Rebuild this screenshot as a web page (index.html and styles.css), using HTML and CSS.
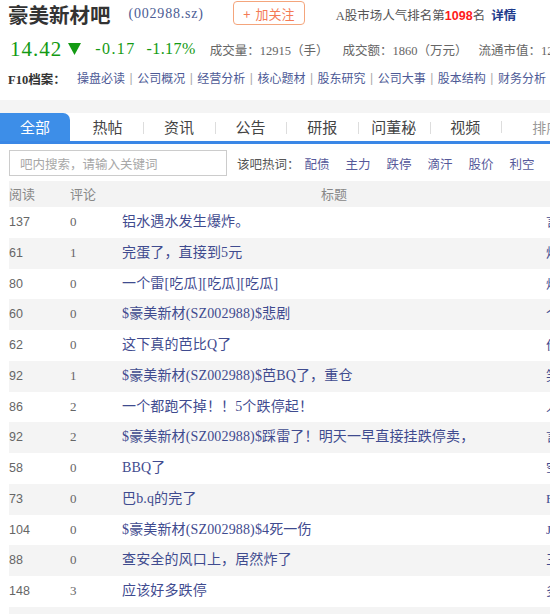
FILE: index.html
```html
<!DOCTYPE html>
<html lang="zh-CN">
<head>
    <meta charset="UTF-8">
    <meta name="viewport" content="width=device-width, initial-scale=1.0">
    <title>豪美新材吧</title>
    <link rel="stylesheet" href="styles.css">
</head>
<body>
    <div class="page">
        <div class="bar-head">
            <h1 class="bar-name">豪美新材吧</h1>
            <span class="bar-code">(002988.sz)</span>
            <a class="follow-btn" href="#"><span class="plus">+</span>加关注</a>
            <span class="rank">A股市场人气排名第<b class="rank-num">1098</b>名 <a class="rank-more" href="#">详情</a></span>
        </div>

        <div class="quote">
            <span class="price">14.42</span>
            <svg class="arrow" width="13" height="12" viewBox="0 0 13 12"><path d="M0 0 H13 L6.5 12 Z" fill="#139a13"/></svg>
            <span class="change">-0.17</span>
            <span class="change pct">-1.17%</span>
            <span class="stat">成交量：12915（手）</span>
            <span class="stat">成交额：1860（万元）</span>
            <span class="stat last">流通市值：12.35（亿）</span>
        </div>

        <div class="f10">
            <span class="f10-label">F10档案：</span>
            <a href="#">操盘必读</a><span class="sep">|</span>
            <a href="#">公司概况</a><span class="sep">|</span>
            <a href="#">经营分析</a><span class="sep">|</span>
            <a href="#">核心题材</a><span class="sep">|</span>
            <a href="#">股东研究</a><span class="sep">|</span>
            <a href="#">公司大事</a><span class="sep">|</span>
            <a href="#">股本结构</a><span class="sep">|</span>
            <a href="#">财务分析</a>
        </div>

        <div class="band"></div>

        <div class="tabs">
            <a class="tab active" href="#">全部</a>
            <a class="tab" href="#">热帖</a>
            <a class="tab" href="#">资讯</a>
            <a class="tab" href="#">公告</a>
            <a class="tab" href="#">研报</a>
            <a class="tab" href="#">问董秘</a>
            <a class="tab" href="#">视频</a>
            <span class="sort">排序方式</span>
        </div>

        <div class="search-row">
            <input class="search-box" type="text" placeholder="吧内搜索，请输入关键词">
            <span class="hot-label">该吧热词：</span>
            <a class="hot-word" href="#">配债</a>
            <a class="hot-word" href="#">主力</a>
            <a class="hot-word" href="#">跌停</a>
            <a class="hot-word" href="#">滴汗</a>
            <a class="hot-word" href="#">股价</a>
            <a class="hot-word" href="#">利空</a>
        </div>

        <div class="post-list">
            <div class="post-row post-head">
                <span>阅读</span><span>评论</span><span class="col-title">标题</span><span></span>
            </div>
            <div class="post-row"><span class="read">137</span><span class="reply">0</span><a class="title" href="#">铝水遇水发生爆炸。</a><a class="author" href="#">言之有理</a></div>
            <div class="post-row"><span class="read">61</span><span class="reply">1</span><a class="title" href="#">完蛋了，直接到5元</a><a class="author" href="#">炉火纯青</a></div>
            <div class="post-row"><span class="read">80</span><span class="reply">0</span><a class="title" href="#">一个雷[吃瓜][吃瓜][吃瓜]</a><a class="author" href="#">炒股养家</a></div>
            <div class="post-row"><span class="read">60</span><span class="reply">0</span><a class="title" href="#">$豪美新材(SZ002988)$悲剧</a><a class="author" href="#">个股观察</a></div>
            <div class="post-row"><span class="read">62</span><span class="reply">0</span><a class="title" href="#">这下真的芭比Q了</a><a class="author" href="#">价值投资</a></div>
            <div class="post-row"><span class="read">92</span><span class="reply">1</span><a class="title" href="#">$豪美新材(SZ002988)$芭BQ了，重仓</a><a class="author" href="#">笑看风云</a></div>
            <div class="post-row"><span class="read">86</span><span class="reply">2</span><a class="title" href="#">一个都跑不掉！！5个跌停起！</a><a class="author" href="#">人生如戏</a></div>
            <div class="post-row"><span class="read">92</span><span class="reply">2</span><a class="title" href="#">$豪美新材(SZ002988)$踩雷了！明天一早直接挂跌停卖，</a><a class="author" href="#">言而有信</a></div>
            <div class="post-row"><span class="read">58</span><span class="reply">0</span><a class="title" href="#">BBQ了</a><a class="author" href="#">空仓等待</a></div>
            <div class="post-row"><span class="read">73</span><span class="reply">0</span><a class="title" href="#">巴b.q的完了</a><a class="author" href="#">Frank</a></div>
            <div class="post-row"><span class="read">104</span><span class="reply">0</span><a class="title" href="#">$豪美新材(SZ002988)$4死一伤</a><a class="author" href="#">Jason</a></div>
            <div class="post-row"><span class="read">88</span><span class="reply">0</span><a class="title" href="#">查安全的风口上，居然炸了</a><a class="author" href="#">三思而行</a></div>
            <div class="post-row"><span class="read">148</span><span class="reply">3</span><a class="title" href="#">应该好多跌停</a><a class="author" href="#">多空博弈</a></div>
            <div class="post-row"><span class="read">75</span><span class="reply">0</span><a class="title" href="#">明天还有吗</a><a class="author" href="#">股友</a></div>
        </div>
    </div>
</body>
</html>
```

FILE: styles.css
```css
* {
    margin: 0;
    padding: 0;
    box-sizing: border-box;
}

body {
    overflow: hidden;
    background: #ffffff;
    font-family: "Liberation Serif", "Noto Sans CJK SC", serif;
    color: #333;
}

a {
    text-decoration: none;
}

.page {
    width: 1000px;
}

/* header */
.bar-head {
    display: flex;
    align-items: center;
    height: 28px;
    padding-left: 8px;
}

.bar-name {
    font-family: "Noto Sans CJK SC", sans-serif;
    font-size: 20.5px;
    font-weight: 700;
    color: #333;
    line-height: 26px;
}

.bar-code {
    margin-left: 18px;
    font-size: 14px;
    letter-spacing: 0.8px;
    color: #4c5c94;
}

.follow-btn {
    display: flex;
    align-items: center;
    justify-content: center;
    width: 72px;
    height: 24px;
    margin-left: 29px;
    margin-top: -2px;
    border: 1px solid #f4a57c;
    border-radius: 4px;
    font-family: "Noto Sans CJK SC", sans-serif;
    font-size: 13px;
    color: #f47a55;
}

.follow-btn .plus {
    margin-right: 5px;
}

.rank {
    margin-left: 31px;
    font-size: 12.5px;
    color: #555;
}

.rank-num {
    font-family: "Liberation Sans", sans-serif;
    color: #ff1a1a;
}

.rank-more {
    margin-left: 3px;
    font-weight: 700;
    color: #1d3a8c;
}

/* quote line */
.quote {
    display: flex;
    align-items: center;
    height: 30px;
    margin-top: 6px;
    padding-left: 10px;
    white-space: nowrap;
}

.price {
    font-size: 21px;
    letter-spacing: 1px;
    color: #139a13;
}

.arrow {
    margin-left: 6px;
}

.change {
    margin-left: 14px;
    font-size: 16px;
    letter-spacing: 1.4px;
    color: #139a13;
}

.change.pct {
    margin-left: 11px;
    letter-spacing: 0.4px;
}

.stat {
    margin-left: 14px;
    font-size: 12.5px;
    color: #666;
}

.stat + .stat {
    margin-left: 14px;
}

.stat.last {
    margin-left: 11px;
}

/* F10 links */
.f10 {
    display: flex;
    align-items: center;
    height: 20px;
    margin-top: 4px;
    padding-left: 8px;
    font-size: 12px;
    white-space: nowrap;
}

.f10-label {
    width: 69px;
    font-weight: 700;
    font-size: 12.5px;
    color: #333;
}

.f10 a {
    color: #4d5a96;
}

.f10 .sep {
    margin: 0 4.5px;
    font-family: "Liberation Sans", sans-serif;
    color: #aaa;
}

.band {
    height: 13px;
    margin-top: 12px;
    background: #f4f4f4;
}

/* tabs */
.tabs {
    display: flex;
    align-items: center;
    height: 31px;
    border-bottom: 3px solid #3a87e6;
    white-space: nowrap;
}

.tab {
    position: relative;
    width: 71.6px;
    height: 28px;
    line-height: 28px;
    text-align: center;
    font-family: "Noto Sans CJK SC", sans-serif;
    font-size: 15px;
    color: #444;
}

.tab + .tab::before {
    content: "";
    position: absolute;
    left: 0;
    top: 9px;
    width: 1px;
    height: 12px;
    background: #ddd;
}

.tab.active {
    background: #3d8ee8;
    color: #fff;
    border-top-right-radius: 7px;
    width: 70px;
    margin-right: 1.6px;
}

.tab.active + .tab::before {
    display: none;
}

.sort {
    position: relative;
    padding-left: 31px;
    font-family: "Noto Sans CJK SC", sans-serif;
    font-size: 14px;
    color: #999;
}

.sort::before {
    content: "";
    position: absolute;
    left: 0;
    top: 4px;
    width: 1px;
    height: 12px;
    background: #ddd;
}

/* search */
.search-row {
    display: flex;
    align-items: center;
    height: 37px;
    padding: 6px 0 5px 9px;
    font-size: 12.5px;
    white-space: nowrap;
}

.search-box {
    width: 218px;
    height: 26px;
    padding-left: 10px;
    border: 1px solid #ccc;
    font-family: "Noto Sans CJK SC", sans-serif;
    font-size: 12.5px;
    outline: none;
}

.search-box::placeholder {
    color: #a8a8a8;
}

.hot-label {
    margin-left: 10px;
    margin-right: 5px;
    color: #555;
}

.hot-word {
    margin-right: 16px;
    color: #56599a;
}

/* post list */
.post-list {
    margin-left: 9px;
}

.post-row {
    display: grid;
    grid-template-columns: 61px 52px 424px 200px;
    height: 30.75px;
    line-height: 30.75px;
    white-space: nowrap;
}

.post-row:nth-child(odd) {
    background: #f4f4f4;
}

.post-row.post-head {
    height: 26px;
    line-height: 26px;
    background: #f3f3f3;
    font-family: "Noto Sans CJK SC", sans-serif;
    font-size: 13px;
    color: #888;
}

.col-title {
    text-align: center;
}

.read {
    font-family: "Liberation Sans", sans-serif;
    font-size: 12.5px;
    color: #666;
}

.reply {
    font-size: 13px;
    color: #666;
}

.title {
    font-size: 14px;
    letter-spacing: 0.15px;
    color: #3f4b8f;
    overflow: hidden;
}

.author {
    font-size: 13px;
    color: #3f4b8f;
}
```
